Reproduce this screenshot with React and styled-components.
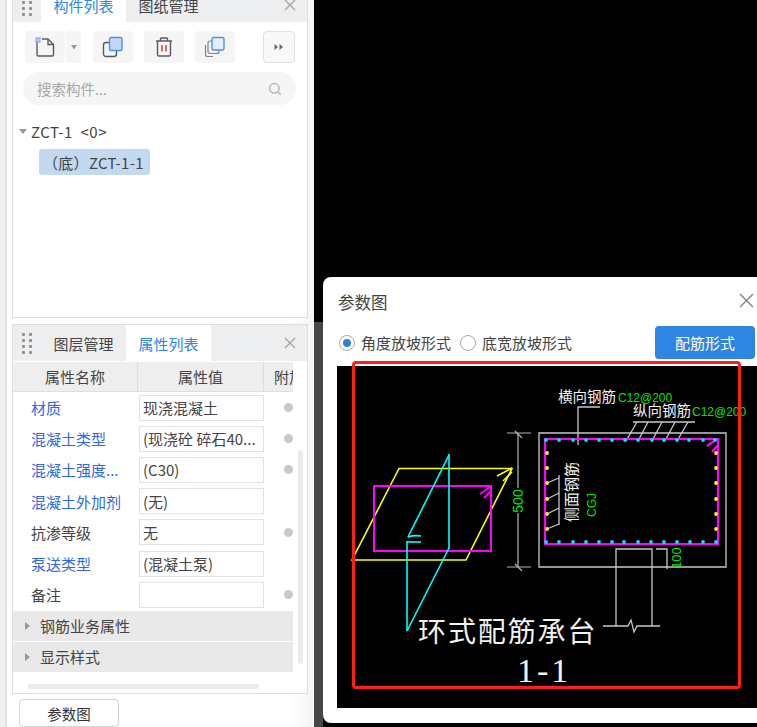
import React from "react";
import styled, { createGlobalStyle } from "styled-components";

const GlobalStyle = createGlobalStyle`
  html, body {
    margin: 0;
    padding: 0;
    background: #000;
  }
  * {
    box-sizing: border-box;
  }
`;

const Page = styled.div`
  position: relative;
  display: flex;
  width: 757px;
  height: 727px;
  overflow: hidden;
  background: #000;
  font-family: "Noto Sans CJK SC", "Liberation Sans", sans-serif;
  font-size: 15px;
  color: #444;
`;

const Sidebar = styled.div`
  display: flex;
  flex-direction: column;
  flex: 0 0 314px;
  height: 727px;
  padding-left: 12px;
  background: linear-gradient(to right, #f1f1f1 0, #f1f1f1 5px, #e2e2e2 5px, #e2e2e2 7px, #fff 7px, #fff 290px, #f4f4f4 314px);
`;

const Divider = styled.div`
  flex: 0 0 9px;
  margin-top: 322px;
  height: 405px;
  background: #474747;
`;

const Panel = styled.div`
  position: relative;
  flex: 0 0 ${(p) => p.$height}px;
  width: 296px;
  margin-top: ${(p) => p.$top}px;
  background: #fff;
  border: 1px solid #dedede;
`;

const TabBar = styled.div`
  display: flex;
  align-items: stretch;
  height: ${(p) => p.$height}px;
  background: #edeef0;
`;

const Grip = styled.div`
  display: grid;
  grid-template-columns: 3px 3px;
  grid-auto-rows: 3px;
  gap: 3px 4px;
  align-content: center;
  justify-content: center;
  width: 28px;
  margin-left: 0;
  span {
    background: #8f8f8f;
    border-radius: 1px;
  }
`;

const Tab = styled.div`
  display: flex;
  align-items: center;
  justify-content: center;
  width: 85px;
  background: ${(p) => (p.$active ? "#fff" : "transparent")};
  color: ${(p) => (p.$active ? "#2d87e8" : "#444")};
`;

const CloseMark = styled.svg`
  margin-left: auto;
  margin-right: 11px;
  align-self: center;
  width: 12px;
  height: 12px;
  stroke: ${(p) => p.$color || "#aaa"};
  stroke-width: 1.5;
  fill: none;
`;

const Toolbar = styled.div`
  display: flex;
  padding: 9px 0 0 12px;
`;

const ToolButton = styled.div`
  display: flex;
  align-items: center;
  justify-content: center;
  width: ${(p) => p.$width || 40}px;
  height: 32px;
  margin-left: ${(p) => p.$gap || 0}px;
  background: #f5f5f5;
  border-radius: 4px;
`;

const OutlineButton = styled(ToolButton)`
  background: #f8f8f8;
  border: 1px solid #e0e0e0;
`;

const SearchBox = styled.div`
  display: flex;
  align-items: center;
  justify-content: space-between;
  width: 273px;
  height: 33px;
  margin: 9px 0 0 10px;
  padding: 0 14px;
  background: #f5f5f5;
  border-radius: 17px;
  font-size: 14.5px;
  color: #a6a6a6;
`;

const TreeRoot = styled.div`
  display: flex;
  align-items: center;
  height: 24px;
  margin: 14px 0 0 6px;
  font-size: 15px;
  letter-spacing: 0.5px;
  color: #444;
`;

const Caret = styled.span`
  width: 0;
  height: 0;
  margin-right: 4px;
  border-left: 4px solid transparent;
  border-right: 4px solid transparent;
  border-top: 5px solid #999;
`;

const TreeLeaf = styled.div`
  display: flex;
  align-items: center;
  width: 111px;
  height: 26px;
  margin: 6px 0 0 26px;
  padding-left: 4px;
  background: #c2d9f1;
  border-radius: 3px;
  font-size: 15px;
  letter-spacing: 0.3px;
  white-space: nowrap;
  color: #444;
`;

const Table = styled.div`
  width: 280px;
  overflow: hidden;
  margin-top: 1px;
`;

const HeaderRow = styled.div`
  display: grid;
  grid-template-columns: 125px 126px 40px;
  height: 30px;
  background: #eeeeee;
  border-bottom: 1px solid #dedede;
`;

const HeaderCell = styled.div`
  display: flex;
  align-items: center;
  justify-content: center;
  border-right: 1px solid #dcdcdc;
  white-space: nowrap;
`;

const ClippedHeaderCell = styled(HeaderCell)`
  justify-content: flex-start;
  padding-left: 10px;
  border-right: 0;
`;

const Row = styled.div`
  display: grid;
  grid-template-columns: 126px 125px 40px;
  align-items: center;
  height: 31.2px;
`;

const Label = styled.div`
  padding-left: 18px;
  white-space: nowrap;
  color: ${(p) => (p.$link ? "#2f68e6" : "#444")};
`;

const Value = styled.div`
  display: flex;
  align-items: center;
  height: 26px;
  padding-left: 3px;
  border: 1px solid #e2e2e2;
  white-space: nowrap;
  overflow: hidden;
  color: #444;
`;

const Dot = styled.span`
  width: 9px;
  height: 9px;
  margin-left: 20px;
  background: #c9c9c9;
  border-radius: 50%;
  opacity: ${(p) => (p.$hidden ? 0 : 1)};
`;

const Section = styled.div`
  display: flex;
  align-items: center;
  height: 30px;
  margin-top: ${(p) => p.$top}px;
  padding-left: 12px;
  background: #e9e9e9;
  color: #444;
`;

const SectionCaret = styled.span`
  width: 0;
  height: 0;
  margin-right: 10px;
  border-top: 4px solid transparent;
  border-bottom: 4px solid transparent;
  border-left: 5px solid #999;
`;

const ScrollThumb = styled.div`
  position: absolute;
  background: #ececec;
  border-radius: 3px;
`;

const HorizontalThumb = styled(ScrollThumb)`
  left: 15px;
  top: 359px;
  width: 231px;
  height: 5px;
`;

const VerticalThumb = styled(ScrollThumb)`
  left: 285px;
  top: 125px;
  width: 5px;
  height: 214px;
`;

const FooterButton = styled.div`
  display: flex;
  align-items: center;
  justify-content: center;
  width: 100px;
  height: 34px;
  margin: 5px 0 0 7px;
  background: #fff;
  border: 1px solid #d4d4d4;
  border-radius: 4px;
  font-size: 14.5px;
  color: #333;
`;

const Dialog = styled.div`
  position: absolute;
  left: 323px;
  top: 277px;
  width: 440px;
  height: 446px;
  background: #fff;
  border-radius: 8px 0 0 8px;
`;

const DialogHead = styled.div`
  display: flex;
  align-items: center;
  height: 49px;
  padding-left: 15px;
  font-size: 16.5px;
  color: #444;
`;

const DialogClose = styled(CloseMark)`
  width: 15px;
  height: 15px;
  margin-right: 9px;
  margin-left: 351px;
  margin-top: -3px;
`;

const OptionBar = styled.div`
  display: flex;
  align-items: center;
  height: 33px;
  padding-left: 16px;
`;

const Radio = styled.span`
  display: flex;
  align-items: center;
  justify-content: center;
  width: 16px;
  height: 16px;
  margin-right: 6px;
  margin-left: ${(p) => p.$gap || 0}px;
  border: 1px solid #aaa;
  border-radius: 50%;
  &::after {
    content: "";
    display: ${(p) => (p.$on ? "block" : "none")};
    width: 8px;
    height: 8px;
    background: #2f7fdc;
    border-radius: 50%;
  }
`;

const OptionText = styled.span`
  font-size: 15px;
  color: #444;
`;

const PrimaryButton = styled.div`
  display: flex;
  align-items: center;
  justify-content: center;
  width: 100px;
  height: 33px;
  margin-left: 83px;
  background: #2f86e2;
  border-radius: 4px;
  color: #fff;
`;

const DrawingArea = styled.div`
  width: 420px;
  height: 342px;
  margin: 7px 0 0 14px;
  background: #000;
`;

const Drawing = styled.svg`
  display: block;
  width: 420px;
  height: 342px;
`;

const RedFrame = styled.div`
  position: absolute;
  left: 29px;
  top: 84px;
  width: 389px;
  height: 328px;
  border: 3.5px solid #ff2014;
  border-radius: 4px;
`;

const CadText = styled.text`
  font-family: "Liberation Sans", sans-serif;
  font-size: ${(p) => p.$size || 12}px;
  fill: ${(p) => p.$fill || "#00e600"};
`;

const CadCjk = styled(CadText)`
  font-family: "Noto Sans CJK SC", sans-serif;
  fill: #f2f2f2;
`;

const CadSerif = styled(CadText)`
  font-family: "Liberation Serif", serif;
  fill: #f2f2f2;
`;

const GripDots = () => (
  <Grip>
    {[...Array(8)].map((_, i) => <span key={i} />)}
  </Grip>
);

const Close = () => (
  <CloseMark viewBox="0 0 12 12">
    <path d="M1 1L11 11M11 1L1 11" />
  </CloseMark>
);

const NewIcon = () => (
  <svg width="22" height="22" viewBox="0 0 22 22" fill="none">
    <path d="M3 5V18.5Q3 20 4.5 20H18Q19.5 20 19.5 18.500V8.500L14 3H8" stroke="#555b66" strokeWidth="1.4" />
    <path d="M14 3V8.500H19.500" stroke="#555b66" strokeWidth="1.4" />
    <rect x="1.500" y="1.500" width="5" height="5" fill="#6fa5e8" />
    <path d="M1.500 4H6.500M4 1.500V6.500" stroke="#d6e6fa" strokeWidth="0.8" />
  </svg>
);

const CopyIcon = () => (
  <svg width="22" height="22" viewBox="0 0 22 22" fill="none">
    <rect x="1.500" y="6.500" width="13" height="14" rx="2.500" stroke="#555b66" strokeWidth="1.4" />
    <rect x="7.500" y="1.500" width="12.500" height="13" rx="1.500" fill="#c3d8f3" stroke="#4a94e8" strokeWidth="1.4" />
  </svg>
);

const TrashIcon = () => (
  <svg width="20" height="22" viewBox="0 0 20 22" fill="none">
    <path d="M2 5H18M6.500 5V3Q6.500 2 7.500 2H12.500Q13.500 2 13.500 3V5" stroke="#555b66" strokeWidth="1.4" />
    <path d="M3.500 5V18.500Q3.500 20 5 20H15Q16.500 20 16.500 18.500V5" stroke="#555b66" strokeWidth="1.4" />
    <path d="M8 9V15.500M12 9V15.500" stroke="#e2463f" strokeWidth="1.6" />
  </svg>
);

const CopyManyIcon = () => (
  <svg width="22" height="22" viewBox="0 0 22 22" fill="none">
    <path d="M1.500 9V18.500Q1.500 20.500 3.500 20.500H9" stroke="#7d828a" strokeWidth="1.2" />
    <rect x="4" y="5" width="11" height="12.500" rx="2" stroke="#7d828a" strokeWidth="1.2" />
    <rect x="8" y="1.500" width="12" height="12.500" rx="1.500" fill="#e3eefb" stroke="#4a94e8" strokeWidth="1.4" />
  </svg>
);

const DropCaret = () => (
  <svg width="8" height="5" viewBox="0 0 8 5"><path d="M1 0H7L4 4.500Z" fill="#999" /></svg>
);

const MoreIcon = () => (
  <svg width="10" height="8" viewBox="0 0 10 8"><path d="M0.500 1L4 4L0.500 7ZM5.500 1L9 4L5.500 7Z" fill="#666" /></svg>
);

const SearchIcon = () => (
  <svg width="14" height="14" viewBox="0 0 14 14" fill="none" stroke="#b5b5b5" strokeWidth="1.5">
    <circle cx="6.300" cy="6.300" r="4.800" />
    <path d="M10 10L12.800 12.800" />
  </svg>
);

const ROWS = [
  { label: "材质", value: "现浇混凝土", link: true, dot: true },
  { label: "混凝土类型", value: "(现浇砼 碎石40...", link: true, dot: true },
  { label: "混凝土强度...", value: "(C30)", link: true, dot: true },
  { label: "混凝土外加剂", value: "(无)", link: true },
  { label: "抗渗等级", value: "无", dot: true },
  { label: "泵送类型", value: "(混凝土泵)", link: true },
  { label: "备注", value: "", dot: true },
];

const TOP_BARS = [546, 559, 573, 586, 599, 612, 625, 638, 652, 664, 677, 689, 703, 715];
const BOTTOM_BARS = [546, 559, 573, 586, 599, 612, 624, 638, 651, 664, 677, 690, 703, 716];
const SIDE_BARS = [453, 468, 483, 499, 514, 529];

const CadLines = ({ color, width = 1, lines }) => (
  <g stroke={color} strokeWidth={width} fill="none">
    {lines.map((d) => <path key={d} d={d} />)}
  </g>
);

const CadDrawing = () => (
  <Drawing viewBox="337 366 420 342">
    {/* left view */}
    <CadLines
      color="#ffff00"
      width={1.6}
      lines={["M399 468.500H512L466 560H352Z", "M497 476L512 468M503 481L512 472"]}
    />
    <CadLines
      color="#ff00ff"
      width={2}
      lines={["M374 486H491V551H374Z", "M480 494L490 487M484 498L491 491"]}
    />
    <CadLines
      color="#00ffff"
      width={1.6}
      lines={[
        "M449 454V549",
        "M449 455L408 537",
        "M407 631V541",
        "M407 631L449 548",
        "M408 537Q414 535 421 536",
        "M407 542H421",
      ]}
    />
    {/* dimension 500 */}
    <CadLines
      color="#b5b5b5"
      width={1.2}
      lines={[
        "M507 433H531M507 567H531",
        "M518 433V488M518 513V567",
        "M515 431L522 438M515 564L522 571",
      ]}
    />
    <CadText transform="rotate(-90 523 501)" x="523" y="501" textAnchor="middle" $size={14}>500</CadText>

    {/* section */}
    <CadLines
      color="#c8c8c8"
      width={1.3}
      lines={[
        "M539 433H726V567H539Z",
        "M616 567V549H652V626M616 567V626",
        "M603 626H628L631 620L634 632L637 626H660",
        "M656 549H667V569",
        "M578 445V407H600",
        "M633 422H695",
        "M637 422L626 441M648 422L638 441M662 422L652 441M675 422L665 441M688 422L677 441",
        "M559 475V525",
        "M547 483L559 478M547 499L559 493M547 514L559 508M547 529L559 524",
      ]}
    />
    <CadLines
      color="#ff00ff"
      width={2.2}
      lines={["M545 439H718V544H545Z", "M707 446L717 439M712 452L718 445"]}
    />
    {TOP_BARS.map((x) => <circle key={x} cx={x} cy="440" r="1.900" fill="#00e5ff" />)}
    {BOTTOM_BARS.map((x) => <circle key={x} cx={x} cy="542" r="1.900" fill="#00e5ff" />)}
    {SIDE_BARS.map((y) => <circle key={y} cx="547" cy={y} r="1.900" fill="#ffff00" />)}
    {SIDE_BARS.map((y) => <circle key={y} cx="716" cy={y} r="1.900" fill="#ffff00" />)}

    <CadCjk x="558" y="402" $size={14.500}>横向钢筋</CadCjk>
    <CadText x="618" y="402" $size={12}>C12@200</CadText>
    <CadCjk x="633" y="416" $size={14.500}>纵向钢筋</CadCjk>
    <CadText x="692" y="416" $size={12}>C12@200</CadText>
    <CadCjk transform="rotate(-90 577 492)" x="577" y="492" textAnchor="middle" $size={15}>侧面钢筋</CadCjk>
    <CadText transform="rotate(-90 596 505)" x="596" y="505" textAnchor="middle" $size={12}>CGJ</CadText>
    <CadText transform="rotate(-90 681 558)" x="681" y="558" textAnchor="middle" $size={13}>100</CadText>

    <CadCjk x="418" y="642" $size={28} letterSpacing="1.900">环式配筋承台</CadCjk>
    <CadSerif x="517" y="682" $size={34} letterSpacing="3">1-1</CadSerif>
  </Drawing>
);

const App = () => (
  <Page>
    <GlobalStyle />
    <Sidebar>
      <Panel $height={331} $top={-13}>
        <TabBar $height={34}>
          <GripDots />
          <Tab $active>构件列表</Tab>
          <Tab>图纸管理</Tab>
          <Close />
        </TabBar>
        <Toolbar>
          <ToolButton><NewIcon /></ToolButton>
          <ToolButton $width={15} $gap={1}><DropCaret /></ToolButton>
          <ToolButton $gap={12}><CopyIcon /></ToolButton>
          <ToolButton $gap={11}><TrashIcon /></ToolButton>
          <ToolButton $gap={11}><CopyManyIcon /></ToolButton>
          <OutlineButton $width={32} $gap={28}><MoreIcon /></OutlineButton>
        </Toolbar>
        <SearchBox>
          <span>搜索构件...</span>
          <SearchIcon />
        </SearchBox>
        <TreeRoot><Caret />ZCT-1&nbsp;&nbsp;&lt;0&gt;</TreeRoot>
        <TreeLeaf>（底）ZCT-1-1</TreeLeaf>
      </Panel>

      <Panel $height={370} $top={6}>
        <TabBar $height={36}>
          <GripDots />
          <Tab>图层管理</Tab>
          <Tab $active>属性列表</Tab>
          <Close />
        </TabBar>
        <Table>
          <HeaderRow>
            <HeaderCell>属性名称</HeaderCell>
            <HeaderCell>属性值</HeaderCell>
            <ClippedHeaderCell>附加</ClippedHeaderCell>
          </HeaderRow>
          {ROWS.map((row) => (
            <Row key={row.label}>
              <Label $link={row.link}>{row.label}</Label>
              <Value>{row.value}</Value>
              <Dot $hidden={!row.dot} />
            </Row>
          ))}
          <Section $top={0.5}><SectionCaret />钢筋业务属性</Section>
          <Section $top={1}><SectionCaret />显示样式</Section>
        </Table>
        <VerticalThumb />
        <HorizontalThumb />
      </Panel>
      <FooterButton>参数图</FooterButton>
    </Sidebar>
    <Divider />

    <Dialog>
      <DialogHead>
        参数图
        <DialogClose viewBox="0 0 15 15" $color="#888">
          <path d="M1 1L14 14M14 1L1 14" />
        </DialogClose>
      </DialogHead>
      <OptionBar>
        <Radio $on />
        <OptionText>角度放坡形式</OptionText>
        <Radio $gap={9} />
        <OptionText>底宽放坡形式</OptionText>
        <PrimaryButton>配筋形式</PrimaryButton>
      </OptionBar>
      <DrawingArea>
        <CadDrawing />
      </DrawingArea>
      <RedFrame />
    </Dialog>
  </Page>
);

export default App;
